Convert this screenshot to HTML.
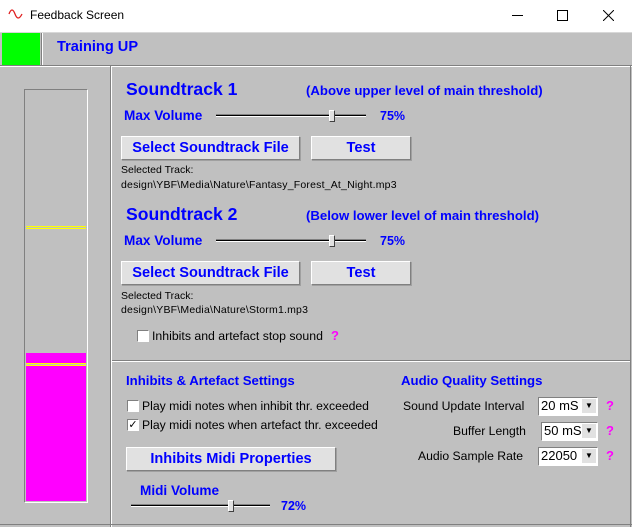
<!DOCTYPE html><html><head><style>
body{margin:0;width:632px;height:527px;background:#c0c0c0;position:relative;overflow:hidden;font-family:"Liberation Sans",Arial,sans-serif}
.a{position:absolute}
.b{color:#0000ff;font-weight:bold;white-space:nowrap}
.t{white-space:nowrap;color:#000}
.btn{position:absolute;background:#e1e1e1;border:1px solid;border-color:#fff #808080 #808080 #fff;box-shadow:1px 1px 0 #a0a0a0;color:#0000ff;font-weight:bold;font-size:14.6px;text-align:center;box-sizing:border-box}
.trk{position:absolute;height:3px;border-top:1px solid #808080;border-bottom:1px solid #fff;background:#000;box-sizing:border-box}
.th{position:absolute;width:6px;height:12px;background:#e1e1e1;border:1px solid;border-color:#fff #404040 #404040 #fff;box-sizing:border-box}
.cb{position:absolute;width:12px;height:12px;background:#fff;border:1px solid;border-color:#808080 #fff #fff #808080;box-sizing:border-box;font-size:11px;line-height:10px;text-align:center}
.cmb{position:absolute;background:#fff;border:1px solid;border-color:#808080 #fff #fff #808080;box-sizing:border-box;font-size:13px;line-height:16px;padding-left:2px}
.cmb i{position:absolute;right:1px;top:1px;width:14px;height:14px;background:#e1e1e1;font-style:normal;font-size:8px;text-align:center;line-height:14px}
.q{position:absolute;color:#ff00ff;font-weight:bold;font-size:13px}
</style></head><body>
<div class="a" style="left:0;top:0;width:632px;height:32px;background:#fff"></div>
<svg class="a" style="left:8px;top:8px" width="16" height="12"><path d="M1 6 Q4 -2 7 6 T14 6" stroke="#e02020" fill="none" stroke-width="1.3"/></svg>
<div class="a t" style="left:30px;top:8px;font-size:12px">Feedback Screen</div>
<div class="a" style="left:512px;top:15px;width:11px;height:1px;background:#000"></div>
<div class="a" style="left:557px;top:10px;width:9px;height:9px;border:1px solid #000"></div>
<svg class="a" style="left:603px;top:10px" width="11" height="11"><path d="M0 0L11 11M11 0L0 11" stroke="#000"/></svg>
<div class="a" style="left:0;top:32px;width:632px;height:1px;background:#d8d8d8"></div>
<div class="a" style="left:2px;top:33px;width:38px;height:32px;background:#00ff00"></div>
<div class="a" style="left:41px;top:33px;width:1px;height:33px;background:#808080"></div>
<div class="a" style="left:42px;top:33px;width:1px;height:33px;background:#fff"></div>
<div class="a b" style="left:57px;top:39px;font-size:14.6px">Training UP</div>
<div class="a" style="left:0;top:65px;width:632px;height:1px;background:#808080"></div>
<div class="a" style="left:0;top:66px;width:632px;height:1px;background:#fff"></div>
<div class="a" style="left:110px;top:66px;width:1px;height:461px;background:#808080"></div>
<div class="a" style="left:111px;top:66px;width:1px;height:461px;background:#fff"></div>
<div class="a" style="left:0;top:524px;width:632px;height:1px;background:#808080"></div>
<div class="a" style="left:630px;top:66px;width:1px;height:461px;background:#808080"></div>
<div class="a" style="left:24px;top:89px;width:64px;height:414px;border:1px solid;border-color:#808080 #fff #fff #808080;box-sizing:border-box"></div>
<div class="a" style="left:26px;top:353px;width:60px;height:148px;background:#ff00ff"></div>
<div class="a" style="left:26px;top:226px;width:60px;height:3px;border-top:1px solid #ffff00;border-bottom:1px solid #ffff00;box-sizing:border-box;background:#c0c0c0"></div>
<div class="a" style="left:26px;top:363px;width:60px;height:3px;border-top:1px solid #ffff00;border-bottom:1px solid #ffff00;box-sizing:border-box;background:#c0c0c0"></div>

<div class="a b" style="left:126px;top:79px;font-size:17.6px">Soundtrack 1</div>
<div class="a b" style="left:306px;top:83px;font-size:13.2px">(Above upper level of main threshold)</div>
<div class="a b" style="left:124px;top:108px;font-size:13.6px">Max Volume</div>
<div class="trk" style="left:216px;top:114px;width:150px"></div><div class="th" style="left:329px;top:110px"></div>
<div class="a b" style="left:380px;top:109px;font-size:12.5px">75%</div>
<div class="btn" style="left:121px;top:136px;width:179px;height:24px;line-height:22px">Select Soundtrack File</div>
<div class="btn" style="left:311px;top:136px;width:100px;height:24px;line-height:22px">Test</div>
<div class="a t" style="left:121px;top:164px;font-size:10.5px">Selected Track:</div>
<div class="a t" style="left:121px;top:179px;font-size:10.5px;letter-spacing:0.2px">design\YBF\Media\Nature\Fantasy_Forest_At_Night.mp3</div>

<div class="a b" style="left:126px;top:204px;font-size:17.6px">Soundtrack 2</div>
<div class="a b" style="left:306px;top:208px;font-size:13.2px">(Below lower level of main threshold)</div>
<div class="a b" style="left:124px;top:233px;font-size:13.6px">Max Volume</div>
<div class="trk" style="left:216px;top:239px;width:150px"></div><div class="th" style="left:329px;top:235px"></div>
<div class="a b" style="left:380px;top:234px;font-size:12.5px">75%</div>
<div class="btn" style="left:121px;top:261px;width:179px;height:24px;line-height:22px">Select Soundtrack File</div>
<div class="btn" style="left:311px;top:261px;width:100px;height:24px;line-height:22px">Test</div>
<div class="a t" style="left:121px;top:290px;font-size:10.5px">Selected Track:</div>
<div class="a t" style="left:121px;top:304px;font-size:10.5px;letter-spacing:0.2px">design\YBF\Media\Nature\Storm1.mp3</div>
<div class="cb" style="left:137px;top:330px"></div>
<div class="a t" style="left:152px;top:329px;font-size:12.3px">Inhibits and artefact stop sound</div>
<div class="q" style="left:331px;top:328px">?</div>

<div class="a" style="left:112px;top:360px;width:518px;height:1px;background:#808080"></div>
<div class="a" style="left:112px;top:361px;width:518px;height:1px;background:#fff"></div>

<div class="a b" style="left:126px;top:373px;font-size:13.2px">Inhibits &amp; Artefact Settings</div>
<div class="cb" style="left:127px;top:400px"></div>
<div class="a t" style="left:142px;top:399px;font-size:12.2px">Play midi notes when inhibit thr. exceeded</div>
<div class="cb" style="left:127px;top:419px">✓</div>
<div class="a t" style="left:142px;top:418px;font-size:12.2px">Play midi notes when artefact thr. exceeded</div>
<div class="btn" style="left:126px;top:447px;width:210px;height:24px;line-height:22px">Inhibits Midi Properties</div>
<div class="a b" style="left:140px;top:483px;font-size:13.6px">Midi Volume</div>
<div class="trk" style="left:131px;top:504px;width:139px"></div><div class="th" style="left:228px;top:500px"></div>
<div class="a b" style="left:281px;top:499px;font-size:12.5px">72%</div>

<div class="a b" style="left:401px;top:373px;font-size:13.2px">Audio Quality Settings</div>
<div class="a t" style="left:403px;top:399px;font-size:12.2px">Sound Update Interval</div>
<div class="a t" style="left:453px;top:424px;font-size:12.2px">Buffer Length</div>
<div class="a t" style="left:418px;top:449px;font-size:12.2px">Audio Sample Rate</div>
<div class="cmb" style="left:538px;top:397px;width:60px;height:19px">20 mS<i>▼</i></div>
<div class="cmb" style="left:541px;top:422px;width:57px;height:19px">50 mS<i>▼</i></div>
<div class="cmb" style="left:538px;top:447px;width:60px;height:19px">22050<i>▼</i></div>
<div class="q" style="left:606px;top:398px">?</div>
<div class="q" style="left:606px;top:423px">?</div>
<div class="q" style="left:606px;top:448px">?</div>
</body></html>
